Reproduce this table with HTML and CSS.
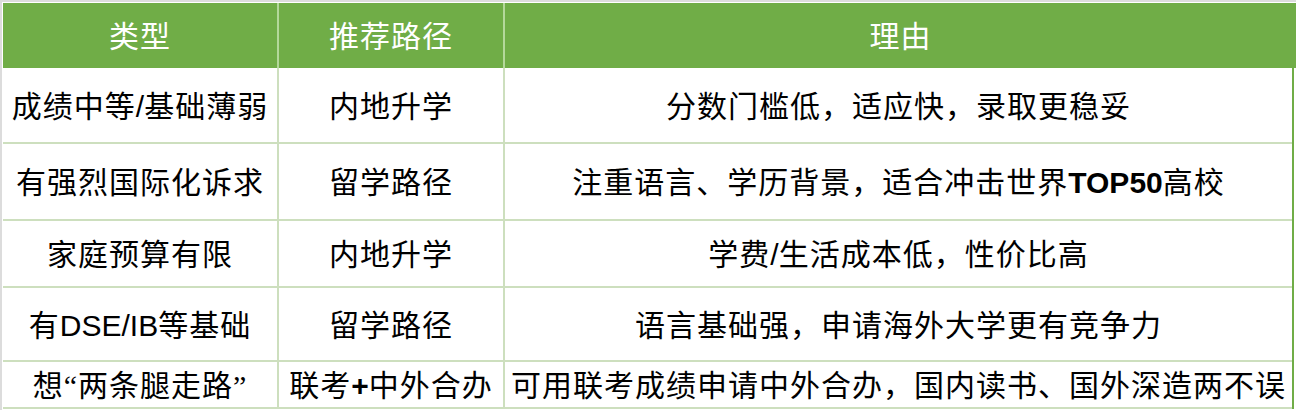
FILE: index.html
```html
<!DOCTYPE html>
<html lang="zh-CN">
<head>
<meta charset="utf-8">
<title>升学路径对比</title>
<link rel="stylesheet" href="styles.css">
</head>
<body>
<div class="sheet">
  <div class="row head">
    <div class="cell">类型</div>
    <div class="cell">推荐路径</div>
    <div class="cell last">理由</div>
  </div>
  <div class="row r1">
    <div class="cell">成绩中等<span class="lat">/</span>基础薄弱</div>
    <div class="cell">内地升学</div>
    <div class="cell last">分数门槛低，适应快，录取更稳妥</div>
  </div>
  <div class="row r2">
    <div class="cell">有强烈国际化诉求</div>
    <div class="cell">留学路径</div>
    <div class="cell last">注重语言、学历背景，适合冲击世界<span class="lat bold">TOP50</span>高校</div>
  </div>
  <div class="row r3">
    <div class="cell">家庭预算有限</div>
    <div class="cell">内地升学</div>
    <div class="cell last">学费<span class="lat">/</span>生活成本低，性价比高</div>
  </div>
  <div class="row r4">
    <div class="cell">有<span class="lat">DSE/IB</span>等基础</div>
    <div class="cell">留学路径</div>
    <div class="cell last">语言基础强，申请海外大学更有竞争力</div>
  </div>
  <div class="row r5">
    <div class="cell">想“两条腿走路”</div>
    <div class="cell">联考<span class="lat bold">+</span>中外合办</div>
    <div class="cell last">可用联考成绩申请中外合办，国内读书、国外深造两不误</div>
  </div>
</div>
</body>
</html>
```
FILE: styles.css
```css
html, body {
  margin: 0;
  padding: 0;
  background: #ffffff;
}

body {
  width: 1296px;
  height: 410px;
  overflow: hidden;
  font-family: "Liberation Serif", "Noto Sans CJK SC", serif;
  font-size: 30px;
  letter-spacing: 1px;
  color: #000000;
}

.sheet {
  border-top: 2px solid #dcdcdc;
  border-left: 2px solid #dcdcdc;
  padding: 1px 0 0 1px;
  height: 407px;
}

.row {
  display: grid;
  grid-template-columns: 276px 226px 1fr;
  box-sizing: border-box;
  width: 1291px;
  border-right: 2px solid #70ad47;
}

.cell {
  display: flex;
  align-items: center;
  justify-content: center;
  white-space: nowrap;
  box-sizing: border-box;
  padding-top: 3px;
  border-right: 2px solid #cddfbe;
  border-bottom: 2px solid #cddfbe;
  line-height: 1;
}

.cell.last {
  border-right: none;
}

.head {
  width: 1293px;
  height: 65px;
  background: #70ad47;
  border-right: none;
}

.head .cell {
  color: #ffffff;
  border-bottom: none;
  border-right-color: #b4d89b;
}

.head .cell.last {
  border-right: none;
}

.r1 { height: 76px; }
.r2 { height: 77px; }
.r3 { height: 67px; }
.r4 { height: 74px; }
.r5 { height: 47px; }

.lat {
  font-family: "Liberation Sans", "Noto Sans CJK SC", sans-serif;
  letter-spacing: 0;
}

.bold {
  font-weight: bold;
}
```
